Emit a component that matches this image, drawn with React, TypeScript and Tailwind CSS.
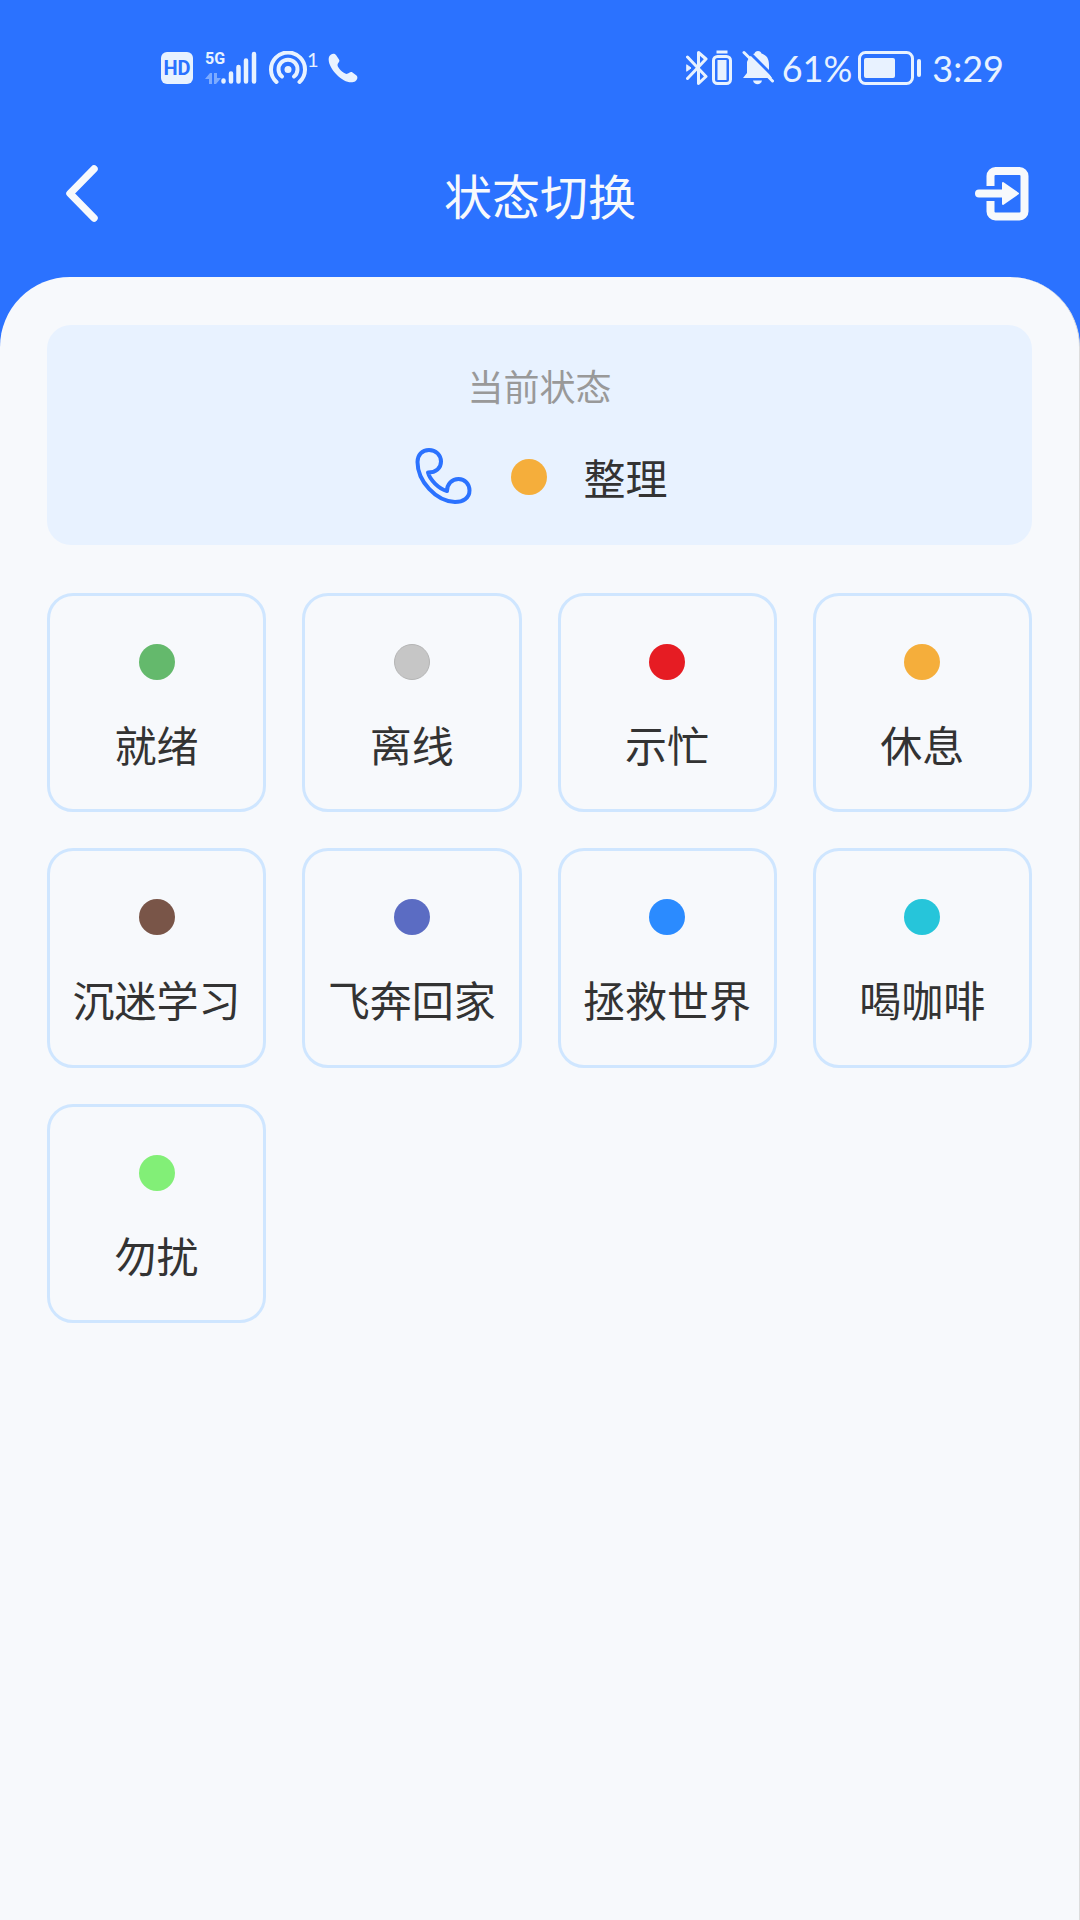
import React, { useState } from "react";

interface AgentStatus {
  id: number;
  name: string;
  dotClass: string;
}

interface StatusCardProps {
  status: AgentStatus;
  onSelect: (status: AgentStatus) => void;
}

const statuses: AgentStatus[] = [
  { id: 1, name: "就绪", dotClass: "bg-[#64b96c]" },
  { id: 2, name: "离线", dotClass: "bg-[#c6c6c6] border border-[#b5b5b5]" },
  { id: 3, name: "示忙", dotClass: "bg-[#e61c23]" },
  { id: 4, name: "休息", dotClass: "bg-[#f5ae3b]" },
  { id: 5, name: "沉迷学习", dotClass: "bg-[#795548]" },
  { id: 6, name: "飞奔回家", dotClass: "bg-[#5b6cc3]" },
  { id: 7, name: "拯救世界", dotClass: "bg-[#2b8bff]" },
  { id: 8, name: "喝咖啡", dotClass: "bg-[#26c5da]" },
  { id: 9, name: "勿扰", dotClass: "bg-[#82ef77]" },
];

const SignalIcon = () => (
  <svg width="36" height="34" viewBox="0 0 36 34" stroke="currentColor" strokeWidth="4.5" strokeLinecap="round">
    <path d="M2.500 29.500v1M10 22.500v8M17.500 16v14.500M25 9.500v21M33 3v27.500" />
  </svg>
);

const HotspotIcon = () => (
  <svg width="38" height="34" viewBox="0 0 38 34" fill="none" stroke="currentColor" strokeWidth="4" strokeLinecap="round">
    <path d="M7.500 31A17 17 0 1 1 30.500 31" />
    <path d="M13 25.500A9.500 9.500 0 1 1 25 25.500" />
    <circle cx="19" cy="18.500" r="3.500" fill="currentColor" stroke="none" />
  </svg>
);

const CallIcon = () => (
  <svg width="32" height="34" viewBox="0 0 32 34" fill="currentColor">
    <path d="M2 6C3 3 7 1.500 9 4l3 4.500c1.500 2.500-1.500 3.500-1.500 5.500 0 3 6 8.500 9 9 2.500 0 3.500-3 6-1.500l4 3c2 2 .5 5.500-3 6.500C17 34-1 16 2 6Z" />
  </svg>
);

const BluetoothIcon = () => (
  <svg width="22" height="36" viewBox="0 0 22 36" fill="none" stroke="currentColor" strokeWidth="3" strokeLinejoin="round" strokeLinecap="round">
    <path d="M1.500 7L20 26.500l-7.500 7V2.500L20 9 1.500 28.500" />
    <path d="M1 15l4 3-4 3Z" fill="currentColor" strokeWidth="1" />
  </svg>
);

const DeviceBatteryIcon = () => (
  <svg width="20" height="36" viewBox="0 0 20 36" fill="none" stroke="currentColor">
    <path d="M4.500 2h11" strokeWidth="3" />
    <rect x="1.500" y="6.500" width="17" height="27" rx="4" strokeWidth="3" />
    <rect x="5.500" y="10" width="9" height="20" fill="currentColor" stroke="none" />
  </svg>
);

const BellOffIcon = () => (
  <svg width="32" height="36" viewBox="0 0 32 36" fill="currentColor">
    <path d="M16 1c2 0 3 1 3.500 2.500C25 5 27 9 27 15v8l3 5H1l4-5V12c2-5 4-7 7.500-8.500C13 2 14 1 16 1Z" />
    <path d="M11 30.500h9c-1 5-8 5-9 0Z" />
    {/* gap above the slash */}
    <path d="M4 -1l29 29" stroke="#2b72ff" strokeWidth="3" />
    <path d="M2 2.500l28.500 28.500" stroke="currentColor" strokeWidth="3" strokeLinecap="round" />
  </svg>
);

const BatteryIcon = () => (
  <svg width="64" height="36" viewBox="0 0 64 36" fill="none" stroke="currentColor">
    <rect x="1.500" y="2.500" width="53" height="31" rx="6" strokeWidth="3" />
    <rect x="6" y="8" width="31" height="20" rx="2" fill="currentColor" stroke="none" />
    <path d="M61 11v14" strokeWidth="4" strokeLinecap="round" />
  </svg>
);

const BackIcon = () => (
  <svg width="60" height="60" viewBox="0 0 60 60" fill="none" stroke="currentColor" strokeWidth="7.500" strokeLinecap="round" strokeLinejoin="round">
    <path d="M46 5L22 29.500L46 54" />
  </svg>
);

const ExitIcon = () => (
  <svg width="60" height="60" viewBox="0 0 60 60" fill="none" stroke="currentColor" strokeWidth="8">
    <path d="M18.500 22V12a5 5 0 0 1 5-5h24a5 5 0 0 1 5 5v35.500a5 5 0 0 1-5 5h-24a5 5 0 0 1-5-5V37" />
    <path d="M7 29.500h24" strokeLinecap="round" />
    <path d="M31 19l15 10.500-15 10.500Z" fill="currentColor" strokeWidth="2" strokeLinejoin="round" />
  </svg>
);

const PhoneOutlineIcon = () => (
  <svg width="64" height="64" viewBox="0 0 64 64" fill="none" stroke="#2b72ff" strokeWidth="4" strokeLinejoin="round">
    <path d="M6.500 17C6.500 10 11 5 18 5S30 10 30 16.500 25 27.500 17 27.500C19 35 28 44 36 46C36 39 41 34 47.500 34S58.500 39 58.500 45.500C58.500 53 52 57 44 57C25 56.500 6.500 36 6.500 17Z" />
  </svg>
);

const StatusBar = () => (
  <div className="flex h-[111px] items-center justify-between pt-6 pr-[76px] pl-[161px] text-[#e8f2ff]">
    <div className="flex items-center">
      <span className="flex size-8 items-center justify-center rounded-md bg-[#e8f2ff] font-['Roboto'] text-[20px] leading-none font-bold text-[#2b72ff]">
        HD
      </span>
      <div className="ml-3 flex h-[34px] w-4 flex-col justify-between">
        <span className="font-['Roboto'] text-[16px] leading-4 font-bold">5G</span>
        <svg width="16" height="12" viewBox="0 0 16 12" fill="#7dabff">
          <path d="M0 6l5-6h2v11H4V6ZM16 5l-5 6H9V0h3v5Z" />
        </svg>
      </div>
      <SignalIcon />
      <div className="ml-3 flex items-start">
        <HotspotIcon />
        <span className="font-['Lato'] text-[20px] leading-4">1</span>
      </div>
      <div className="ml-2">
        <CallIcon />
      </div>
    </div>
    <div className="flex items-center">
      <BluetoothIcon />
      <div className="ml-1">
        <DeviceBatteryIcon />
      </div>
      <div className="ml-2.5">
        <BellOffIcon />
      </div>
      <span className="ml-2 font-['Lato'] text-[36px] leading-9">61%</span>
      <div className="ml-1.5">
        <BatteryIcon />
      </div>
      <span className="ml-2.5 font-['Lato'] text-[36px] leading-9">3:29</span>
    </div>
  </div>
);

const StatusCard: React.FC<StatusCardProps> = ({ status, onSelect }) => {
  return (
    <button
      type="button"
      className="flex aspect-square flex-col items-center gap-9 rounded-[26px] border-3 border-[#cfe6ff] pt-12"
      onClick={() => onSelect(status)}
    >
      <span className={`size-9 rounded-full ${status.dotClass}`} />
      <span className="text-[42px] leading-14 whitespace-nowrap">{status.name}</span>
    </button>
  );
};

const App: React.FC = () => {
  const [current, setCurrent] = useState<AgentStatus>({
    id: 0,
    name: "整理",
    dotClass: "bg-[#f5ae3b]",
  });

  return (
    <div className="flex min-h-screen flex-col bg-[#2b72ff] font-['Noto_Sans_CJK_SC',sans-serif] text-[#333333]">
      <StatusBar />
      <header className="flex h-[166px] items-center justify-between px-12 text-[#f7f9fc]">
        <button type="button" aria-label="返回">
          <BackIcon />
        </button>
        <h1 className="text-[48px] leading-14">状态切换</h1>
        <button type="button" aria-label="退出">
          <ExitIcon />
        </button>
      </header>

      <main className="flex-1 rounded-t-[70px] border-r border-[#dddddd] bg-[#f7f9fc] px-[47px] pt-12">
        {/* Current status */}
        <section className="rounded-[24px] bg-[#e8f2ff] py-9">
          <h2 className="text-center text-[36px] leading-12 text-[#999999]">当前状态</h2>
          <div className="mt-9 flex items-center justify-center gap-9">
            <PhoneOutlineIcon />
            <span className={`size-9 rounded-full ${current.dotClass}`} />
            <span className="text-[42px] leading-14">{current.name}</span>
          </div>
        </section>

        {/* Available statuses */}
        <div className="mt-12 grid grid-cols-4 gap-9">
          {statuses.map((status) => (
            <StatusCard key={status.id} status={status} onSelect={setCurrent} />
          ))}
        </div>
      </main>
    </div>
  );
};

export default App;
